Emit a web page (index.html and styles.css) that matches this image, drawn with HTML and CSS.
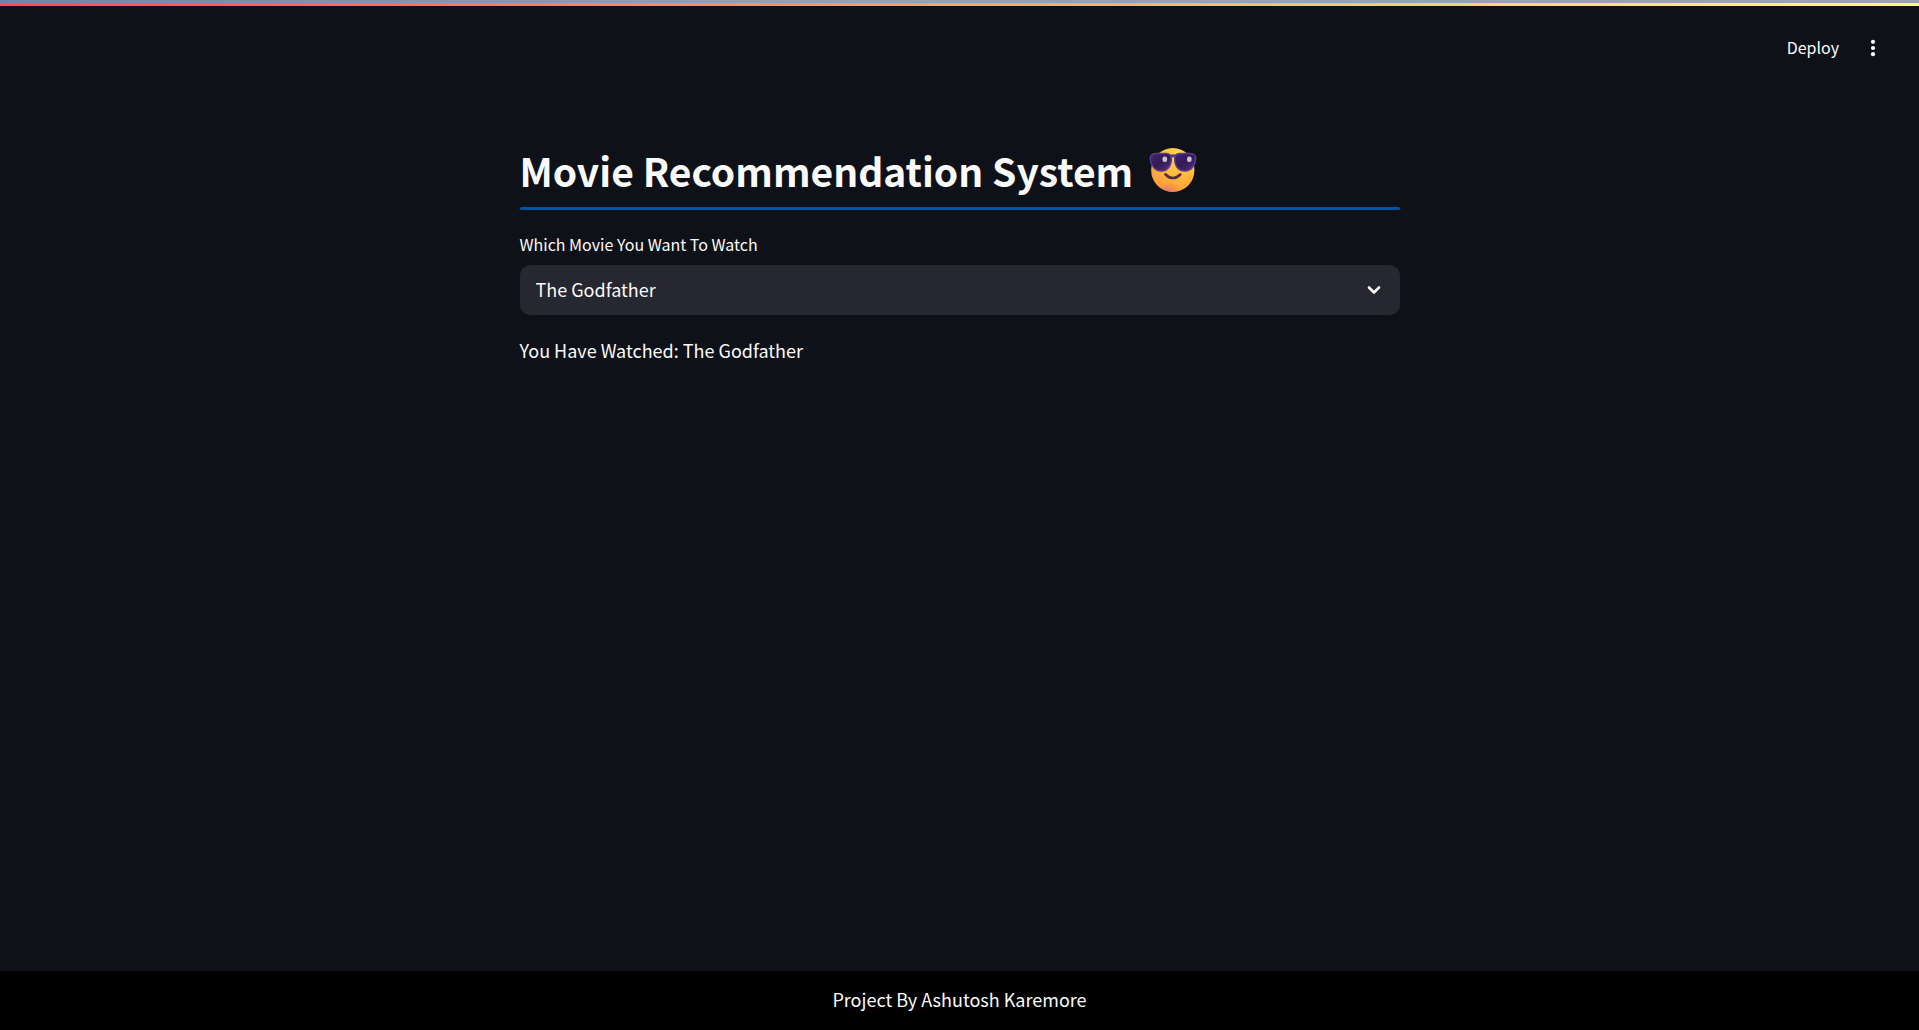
FILE: index.html
```html
<!DOCTYPE html>
<html lang="en">
<head>
  <meta charset="utf-8">
  <meta name="viewport" content="width=device-width, initial-scale=1">
  <title>Movie Recommendation System</title>
  <link rel="stylesheet" href="styles.css">
</head>
<body>
  <div class="window-edge"></div>
  <div class="decoration"></div>
  <header class="toolbar">
    <button class="deploy" type="button">Deploy</button>
    <button class="menu" type="button" aria-label="Main menu">
      <svg width="20" height="20" viewBox="0 0 20 20" fill="currentColor" aria-hidden="true">
        <circle cx="10" cy="3.8" r="2.1"/><circle cx="10" cy="10" r="2.1"/><circle cx="10" cy="16.2" r="2.1"/>
      </svg>
    </button>
  </header>
  <main class="content">
    <h1 class="title">
      <span>Movie Recommendation System</span>
      <svg class="emoji" width="48" height="46" viewBox="0 0 48 46" role="img" aria-label="Smiling face with sunglasses">
        <defs>
          <radialGradient id="face" cx="0.7" cy="0.15" r="1.1">
            <stop offset="0" stop-color="#ffe052"/><stop offset="0.45" stop-color="#ffb83c"/><stop offset="0.78" stop-color="#fd9f3c"/><stop offset="1" stop-color="#ee6a4a"/>
          </radialGradient>
          <radialGradient id="chin" cx="0.4" cy="1.05" r="0.3">
            <stop offset="0" stop-color="#e564a0"/><stop offset="1" stop-color="#f0803f" stop-opacity="0"/>
          </radialGradient>
          <linearGradient id="lens" x1="0" y1="0" x2="1" y2="1">
            <stop offset="0" stop-color="#44246c"/><stop offset="0.5" stop-color="#321a55"/><stop offset="1" stop-color="#563282"/>
          </linearGradient>
        </defs>
        <rect x="2.2" y="1" width="43.2" height="44" rx="21.6" fill="url(#face)"/>
        <rect x="2.2" y="1" width="43.2" height="44" rx="21.6" fill="url(#chin)"/>
        <g fill="url(#lens)" stroke="#5a3a8c" stroke-width="1.5">
          <path d="M1.500 9.500Q3 6.500 8 6.500h9.500q4.800.3 4.800 5.200 0 6-3 9.300-3 3.200-7.300 3-4.500-.2-7.500-3.800-4-5-3-10.700z"/>
          <path d="M46.500 9.500q-1.500-3-6.500-3h-9.500q-4.800.3-4.800 5.200 0 6 3 9.300 3 3.200 7.300 3 4.500-.2 7.500-3.800 4-5 3-10.700z"/>
        </g>
        <path d="M21 9.500q3-1.300 6 0" fill="none" stroke="#5a3a8c" stroke-width="3"/>
        <rect x="13.500" y="9.500" width="4.600" height="5.600" rx="2" fill="#c9bedb"/>
        <rect x="38" y="9.500" width="4.600" height="5.600" rx="2" fill="#c9bedb"/>
        <path d="M16.500 27.500q7.400 7 14.800 0" fill="none" stroke="#502d45" stroke-width="2.600" stroke-linecap="round"/>
      </svg>
    </h1>
    <hr class="rule">
    <label class="label" for="movie">Which Movie You Want To Watch</label>
    <div class="field">
      <select class="select" id="movie">
        <option>The Godfather</option>
      </select>
      <svg class="chevron" width="20" height="20" viewBox="0 0 20 20" fill="none" stroke="currentColor" stroke-width="2.600" stroke-linecap="round" stroke-linejoin="round" aria-hidden="true">
        <path d="M5 7.500l5 5 5-5"/>
      </svg>
    </div>
    <p class="result">You Have Watched: The Godfather</p>
  </main>
  <footer class="footer">Project By Ashutosh Karemore</footer>
</body>
</html>
```
FILE: styles.css
```css
* {
  box-sizing: border-box;
}

body {
  margin: 0;
  min-height: 100vh;
  display: flex;
  flex-direction: column;
  background: #0e1117;
  color: #fafafa;
  font-family: "Noto Sans CJK SC", "Source Sans Pro", sans-serif;
  font-size: 18px;
  line-height: 32px;
}

.window-edge {
  height: 3px;
  background: linear-gradient(90deg, #6e87a8, #949fb5 40%, #9ca2b4);
}

.decoration {
  height: 3px;
  background: linear-gradient(90deg, #ff4b4b, #fffd80);
}

.toolbar {
  display: flex;
  justify-content: flex-end;
  align-items: center;
  gap: 24px;
  height: 84px;
  padding: 0 36px;
}

.toolbar button {
  display: flex;
  padding: 0;
  border: 0;
  background: none;
  color: inherit;
  font: inherit;
  cursor: pointer;
}

.toolbar .deploy {
  padding-bottom: 2px;
  font-size: 16px;
}

.content {
  flex: 1;
  width: 100%;
  max-width: 880px;
  margin: 0 auto;
  padding-top: 48px;
}

.title {
  display: flex;
  align-items: center;
  gap: 16px;
  margin: 0;
  font-size: 39px;
  font-weight: 700;
  line-height: 64px;
}

.rule {
  height: 3px;
  margin: 5px 0 18px;
  border: 0;
  border-radius: 2px;
  background: #0054a3;
}

.label {
  display: block;
  margin-bottom: 5px;
  font-size: 16px;
}

.field {
  position: relative;
}

.select {
  display: block;
  width: 100%;
  height: 50px;
  padding: 0 48px 2px 16px;
  border: 0;
  border-radius: 10px;
  appearance: none;
  background: #262730;
  color: inherit;
  font: inherit;
}

.chevron {
  position: absolute;
  top: 15px;
  right: 16px;
  pointer-events: none;
}

.result {
  margin: 19px 0;
}

.footer {
  padding: 12px 16px 15px;
  background: #000;
  text-align: center;
}
```
